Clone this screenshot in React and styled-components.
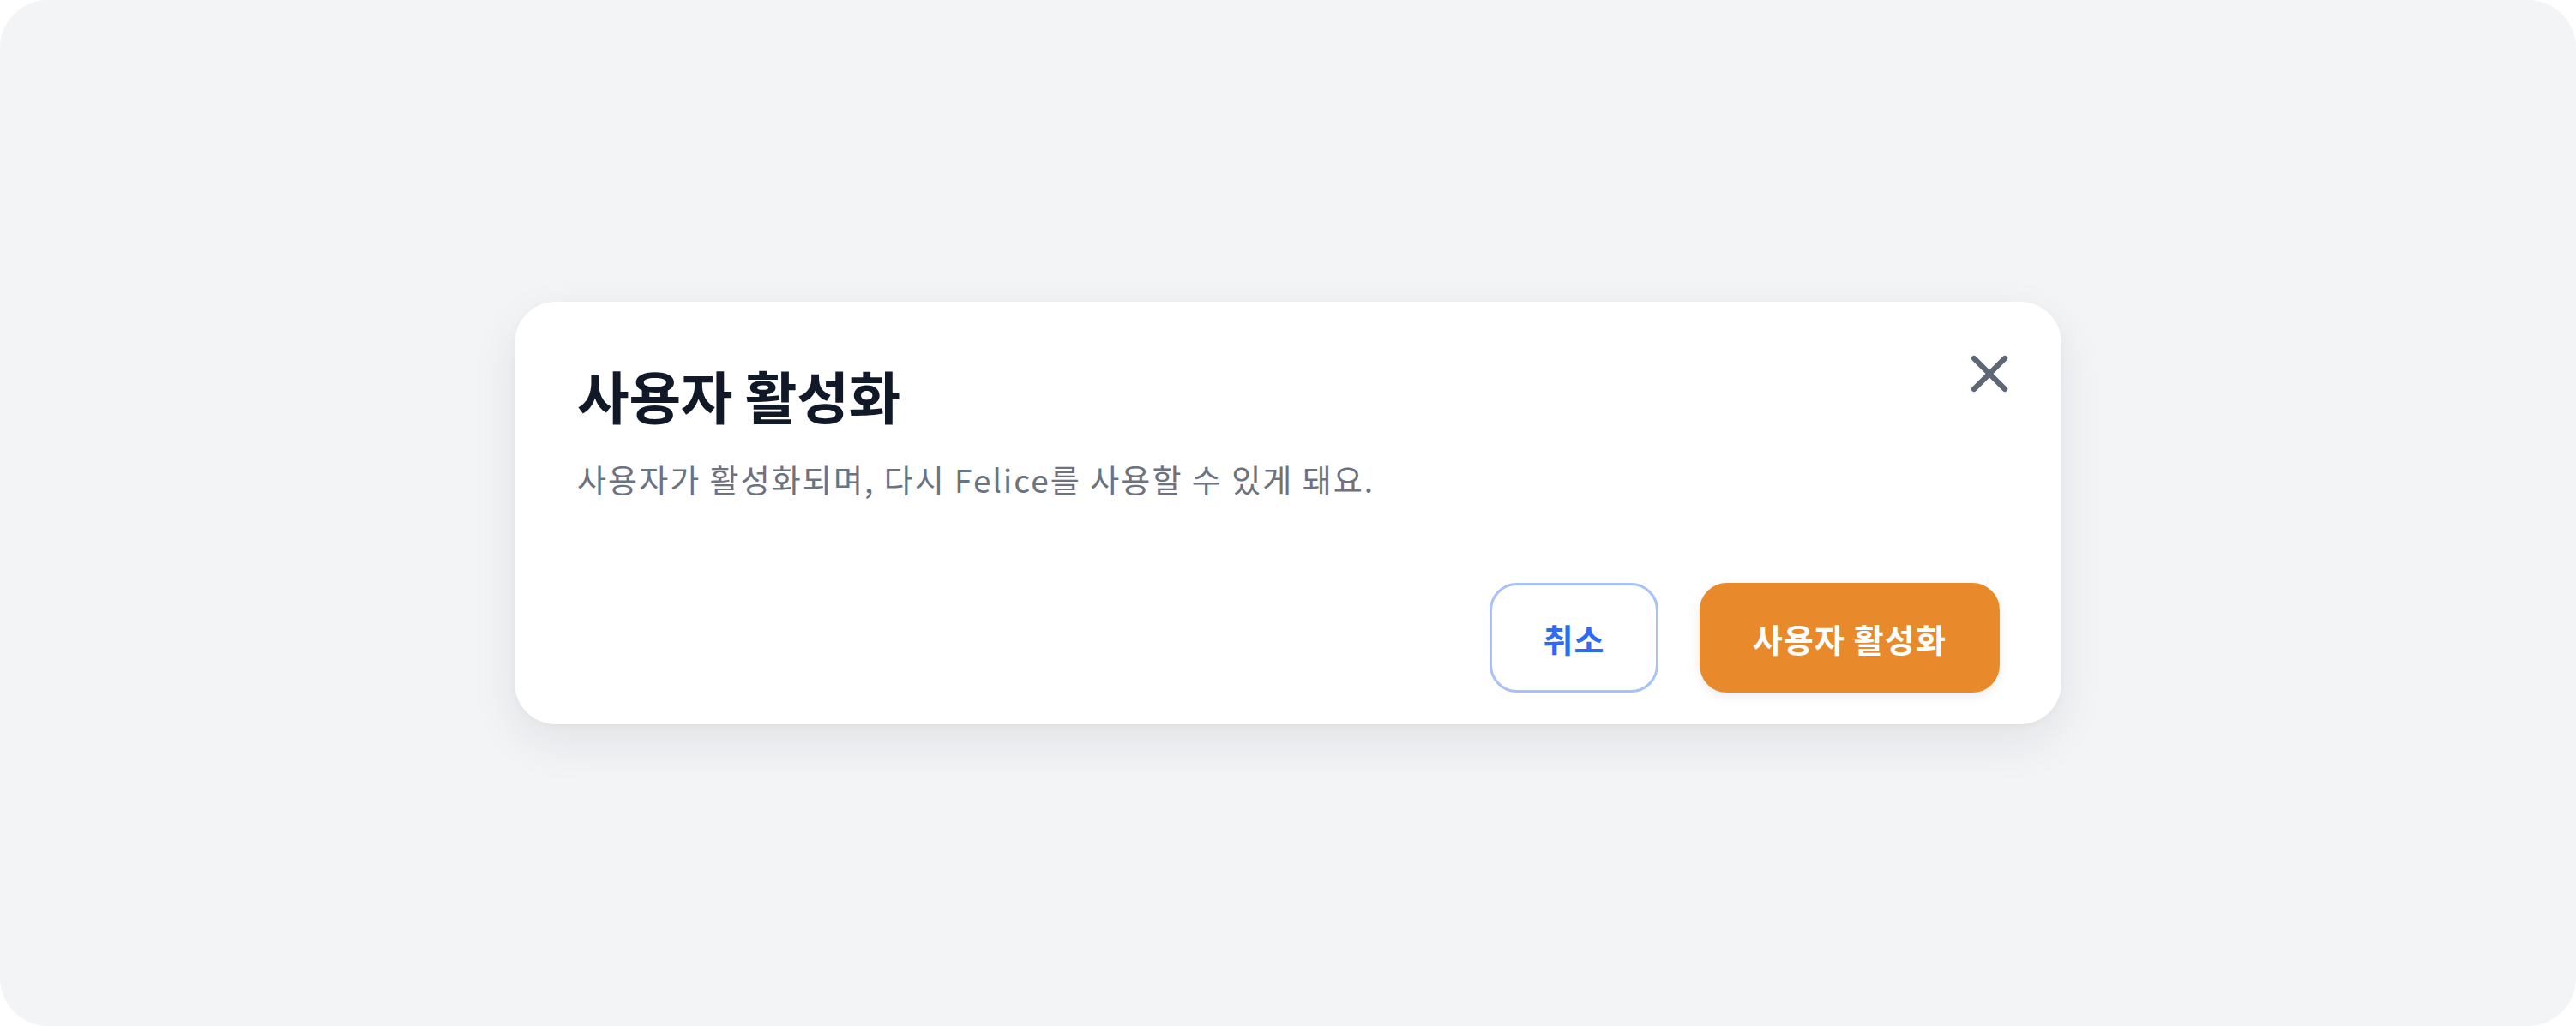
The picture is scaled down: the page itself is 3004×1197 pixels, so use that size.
import React from "react";
import styled, { createGlobalStyle } from "styled-components";
import { X } from "lucide-react";

const GlobalStyle = createGlobalStyle`
  html, body {
    margin: 0;
    padding: 0;
    background: #ffffff;
  }
  body {
    font-family: "Noto Sans CJK KR", "Noto Sans", sans-serif;
  }
  * {
    box-sizing: border-box;
  }
`;

const Backdrop = styled.main`
  height: 100vh;
  background: #f3f4f6;
  border-radius: 56px;
  display: flex;
  align-items: center;
  justify-content: center;
`;

const Dialog = styled.section`
  position: relative;
  width: 1804px;
  padding: 63px 72px 37px 73px;
  background: #ffffff;
  border-radius: 48px;
  box-shadow: 0 20px 56px rgba(17, 24, 39, 0.08), 0 2px 8px rgba(17, 24, 39, 0.03);
`;

const CloseButton = styled.button`
  position: absolute;
  top: 48px;
  right: 48px;
  width: 72px;
  height: 72px;
  padding: 0;
  border: none;
  background: transparent;
  color: #5f6674;
  display: flex;
  align-items: center;
  justify-content: center;
  cursor: pointer;
`;

const Title = styled.h2`
  margin: 0;
  font-size: 66px;
  line-height: 90px;
  font-weight: 700;
  letter-spacing: -0.005em;
  color: #111827;
`;

const Description = styled.p`
  margin: 28px 0 0;
  font-size: 37px;
  line-height: 52px;
  font-weight: 400;
  letter-spacing: 0.055em;
  color: #6b7280;
`;

const Footer = styled.div`
  margin-top: 95px;
  display: flex;
  justify-content: flex-end;
  gap: 48px;
`;

const Button = styled.button`
  height: 128px;
  padding: 0 59px;
  border-radius: 32px;
  font-family: inherit;
  font-size: 38px;
  font-weight: 700;
  letter-spacing: 0.03em;
  cursor: pointer;
  border: 3px solid ${(p) => (p.$primary ? "#e88a2b" : "#a6c1fc")};
  background: ${(p) => (p.$primary ? "#e88a2b" : "#ffffff")};
  color: ${(p) => (p.$primary ? "#ffffff" : "#2f6af5")};
  box-shadow: ${(p) => (p.$primary ? "0 4px 14px rgba(0, 0, 0, 0.08)" : "none")};
`;

export default function App() {
  return (
    <>
      <GlobalStyle />
      <Backdrop>
        <Dialog role="dialog" aria-labelledby="activate-title">
          <CloseButton aria-label="닫기">
            <X size={72} strokeWidth={2.1} />
          </CloseButton>
          <Title id="activate-title">사용자 활성화</Title>
          <Description>사용자가 활성화되며, 다시 Felice를 사용할 수 있게 돼요.</Description>
          <Footer>
            <Button>취소</Button>
            <Button $primary>사용자 활성화</Button>
          </Footer>
        </Dialog>
      </Backdrop>
    </>
  );
}
